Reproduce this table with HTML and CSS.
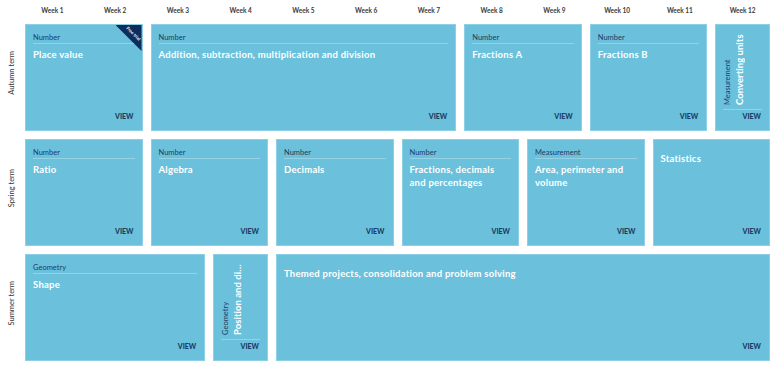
FILE: index.html
```html
<!DOCTYPE html>
<html lang="en">
<head>
<meta charset="utf-8">
<title>Scheme of learning</title>
<link rel="stylesheet" href="styles.css">
</head>
<body>
<div class="planner">
  <div class="corner"></div>
  <div class="week">Week 1</div>
  <div class="week">Week 2</div>
  <div class="week">Week 3</div>
  <div class="week">Week 4</div>
  <div class="week">Week 5</div>
  <div class="week">Week 6</div>
  <div class="week">Week 7</div>
  <div class="week">Week 8</div>
  <div class="week">Week 9</div>
  <div class="week">Week 10</div>
  <div class="week">Week 11</div>
  <div class="week">Week 12</div>

  <div class="term"><span>Autumn term</span></div>
  <div class="card span-2">
    <div class="cat">Number</div>
    <div class="title">Place value</div>
    <div class="view">VIEW</div>
    <div class="ribbon"><span>Free trial</span></div>
  </div>
  <div class="card span-5">
    <div class="cat">Number</div>
    <div class="title">Addition, subtraction, multiplication and division</div>
    <div class="view">VIEW</div>
  </div>
  <div class="card span-2">
    <div class="cat">Number</div>
    <div class="title">Fractions A</div>
    <div class="view">VIEW</div>
  </div>
  <div class="card span-2">
    <div class="cat">Number</div>
    <div class="title">Fractions B</div>
    <div class="view">VIEW</div>
  </div>
  <div class="card span-1 narrow">
    <div class="vbox">
      <div class="vcat">Measurement</div>
      <div class="vtitle">Converting units</div>
    </div>
    <div class="view">VIEW</div>
  </div>

  <div class="term"><span>Spring term</span></div>
  <div class="card span-2">
    <div class="cat">Number</div>
    <div class="title">Ratio</div>
    <div class="view">VIEW</div>
  </div>
  <div class="card span-2">
    <div class="cat">Number</div>
    <div class="title">Algebra</div>
    <div class="view">VIEW</div>
  </div>
  <div class="card span-2">
    <div class="cat">Number</div>
    <div class="title">Decimals</div>
    <div class="view">VIEW</div>
  </div>
  <div class="card span-2">
    <div class="cat">Number</div>
    <div class="title">Fractions, decimals and percentages</div>
    <div class="view">VIEW</div>
  </div>
  <div class="card span-2">
    <div class="cat">Measurement</div>
    <div class="title">Area, perimeter and volume</div>
    <div class="view">VIEW</div>
  </div>
  <div class="card span-2 nocat">
    <div class="title">Statistics</div>
    <div class="view">VIEW</div>
  </div>

  <div class="term"><span>Summer term</span></div>
  <div class="card span-3">
    <div class="cat">Geometry</div>
    <div class="title">Shape</div>
    <div class="view">VIEW</div>
  </div>
  <div class="card span-1 narrow">
    <div class="vbox">
      <div class="vcat">Geometry</div>
      <div class="vtitle" title="Position and direction">Position and direction</div>
    </div>
    <div class="view">VIEW</div>
  </div>
  <div class="card span-8 nocat">
    <div class="title">Themed projects, consolidation and problem solving</div>
    <div class="view">VIEW</div>
  </div>
</div>
</body>
</html>
```

FILE: styles.css
```css
* { box-sizing: border-box; }

html, body {
  margin: 0;
  padding: 0;
  background: #ffffff;
}

body {
  font-family: Lato, "Open Sans", "Liberation Sans", sans-serif;
  color: #2b2b2b;
}

.planner {
  display: grid;
  width: 770px;
  grid-template-columns: 17px repeat(12, 1fr);
  grid-template-rows: 16px 107px 107px 107px;
  column-gap: 8px;
  row-gap: 8px;
}

.week {
  font-size: 6.5px;
  font-weight: 700;
  color: #3a3a3a;
  text-align: center;
  line-height: 10px;
  padding-top: 6px;
  white-space: nowrap;
}

.term {
  display: flex;
  align-items: center;
  justify-content: center;
  padding-left: 5px;
  padding-bottom: 9px;
}

.term span {
  writing-mode: vertical-rl;
  transform: rotate(180deg);
  font-size: 7.5px;
  color: #333;
  white-space: nowrap;
}

.span-1 { grid-column: span 1; }
.span-2 { grid-column: span 2; }
.span-3 { grid-column: span 3; }
.span-5 { grid-column: span 5; }
.span-8 { grid-column: span 8; }

.card {
  position: relative;
  overflow: hidden;
  display: flex;
  flex-direction: column;
  background: #6bc1dc;
  border: 1px solid #8dd0e6;
  padding: 8px 7px 9px 7px;
}

.cat {
  font-size: 7.5px;
  line-height: 10px;
  color: #1d3c63;
  border-bottom: 1px solid rgba(255, 255, 255, 0.28);
}

.title {
  margin-top: 5px;
  font-size: 9.5px;
  line-height: 12.7px;
  font-weight: 700;
  color: #ffffff;
  letter-spacing: 0.25px;
}

.nocat .title {
  margin-top: 5px;
}

.view {
  margin-top: auto;
  align-self: flex-end;
  padding-right: 1px;
  font-size: 7px;
  line-height: 9px;
  font-weight: 900;
  color: #1d3c63;
}

.narrow .vbox {
  flex: 1;
  min-height: 0;
  display: flex;
  flex-direction: row;
  padding-bottom: 4px;
  border-bottom: 1px solid rgba(255, 255, 255, 0.28);
  margin-bottom: 2px;
}

.vcat,
.vtitle {
  writing-mode: vertical-rl;
  transform: rotate(180deg);
  white-space: nowrap;
  overflow: hidden;
  text-overflow: ellipsis;
}

.vcat {
  font-size: 7.5px;
  line-height: 10px;
  color: #1d3c63;
}

.vtitle {
  font-size: 9.5px;
  line-height: 13px;
  font-weight: 700;
  color: #ffffff;
  letter-spacing: 0.05px;
}

.ribbon {
  position: absolute;
  top: 0;
  right: 0;
  width: 26px;
  height: 26px;
  background: #0e2d5c;
  clip-path: polygon(0 0, 100% 0, 100% 100%);
}

.ribbon span {
  position: absolute;
  top: 6px;
  left: 5px;
  width: 24px;
  text-align: center;
  transform: rotate(45deg);
  font-size: 4.5px;
  line-height: 6px;
  font-weight: 700;
  color: #ffffff;
  white-space: nowrap;
}
```
